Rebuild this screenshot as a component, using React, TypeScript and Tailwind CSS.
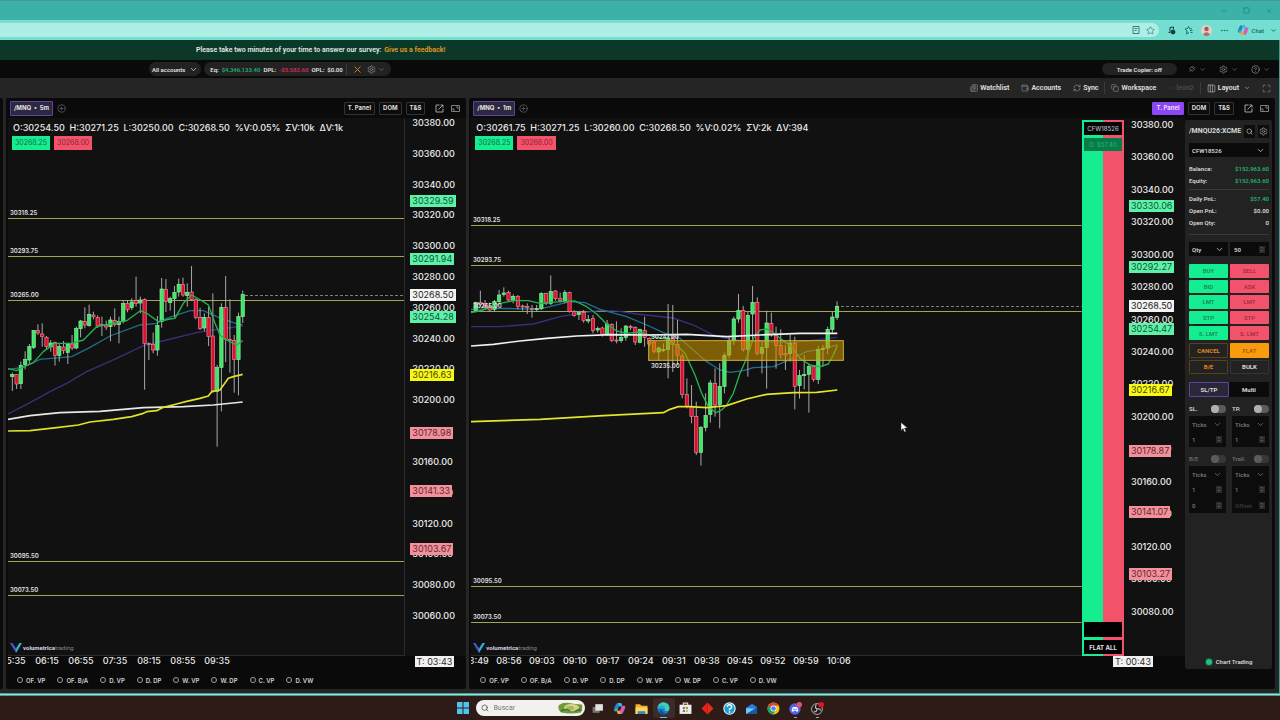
import type { ReactNode } from "react";
import {
  ChevronDown, ChevronUp, CircleHelp, CirclePlus, Columns3, Copy, Ellipsis, Maximize,
  Minus, Newspaper, Plug, RefreshCw, Search, Settings, Square, Star, Wallet, X,
} from "lucide-react";

type Candle = [high: number, top: number, bottom: number, low: number, up: 0 | 1];
type Line = { color: string; width: number; points: string };
type Tone = "green" | "white" | "yellow" | "pink";
type Badge = { price: number; tone: Tone };

const TONES: Record<Tone, string> = {
  green: "bg-[#5cf3a8] text-[#145238]",
  white: "bg-[#f4f4f4] text-[#222222]",
  yellow: "bg-[#f7f813] text-[#44440c]",
  pink: "bg-[#f2919b] text-[#672630]",
};

const LEVELS = [30318.25, 30293.75, 30265, 30095.5, 30073.5];

// series are kept on a 3x grid and scaled down when drawn
const CANDLES_5M: Candle[] = [
  [518, 524, 530, 573, 1], [522, 524, 552, 567, 0], [485, 497, 551, 567, 1], [454, 478, 494, 508, 1],
  [432, 440, 480, 492, 1], [390, 392, 442, 447, 1], [373, 392, 399, 405, 0], [370, 402, 410, 440, 0],
  [408, 412, 440, 450, 0], [420, 429, 441, 455, 1], [425, 428, 466, 497, 0], [432, 440, 466, 485, 1],
  [423, 441, 452, 462, 0], [428, 433, 457, 492, 1], [405, 432, 444, 450, 0], [380, 386, 444, 448, 1],
  [360, 363, 386, 412, 1], [322, 365, 375, 385, 0], [314, 343, 377, 380, 1], [335, 345, 350, 358, 0],
  [346, 352, 378, 384, 0], [350, 373, 376, 408, 0], [362, 375, 381, 390, 0], [350, 360, 380, 424, 1],
  [325, 362, 374, 380, 0], [350, 365, 374, 430, 1], [302, 311, 364, 370, 1], [300, 311, 329, 337, 0],
  [295, 306, 323, 330, 1], [230, 302, 311, 320, 0], [290, 300, 309, 340, 1], [295, 299, 430, 569, 0],
  [427, 431, 434, 480, 0], [398, 434, 450, 460, 0], [348, 376, 450, 467, 1], [234, 267, 365, 383, 1],
  [237, 269, 304, 336, 0], [290, 296, 308, 332, 1], [258, 278, 296, 352, 1], [236, 253, 276, 290, 1],
  [233, 253, 285, 290, 0], [250, 277, 287, 320, 1], [198, 276, 298, 302, 0], [295, 299, 353, 358, 0],
  [323, 353, 386, 390, 0], [340, 352, 384, 394, 1], [320, 353, 410, 438, 0], [280, 408, 572, 578, 0],
  [495, 503, 574, 740, 1], [310, 322, 502, 634, 1], [228, 322, 418, 486, 0], [298, 418, 422, 518, 0],
  [405, 422, 478, 578, 0], [338, 350, 479, 586, 1], [272, 284, 350, 369, 1],
];

const CANDLES_1M: Candle[] = [
  [155, 158, 182, 187, 1], [122, 158, 163, 170, 0], [150, 160, 170, 180, 0], [158, 170, 180, 185, 0],
  [150, 155, 178, 183, 1], [120, 135, 155, 160, 1], [112, 129, 133, 140, 1], [122, 127, 150, 155, 0],
  [133, 139, 152, 160, 1], [135, 139, 170, 178, 0], [164, 168, 171, 182, 0], [160, 169, 172, 192, 0],
  [165, 175, 178, 203, 0], [165, 176, 179, 186, 1], [127, 130, 176, 180, 1], [128, 130, 160, 165, 0],
  [76, 124, 160, 165, 1], [120, 123, 146, 152, 0], [128, 145, 152, 158, 0], [120, 127, 155, 160, 1],
  [125, 127, 184, 188, 0], [180, 184, 196, 200, 0], [184, 188, 194, 210, 1], [180, 188, 212, 218, 0],
  [195, 209, 213, 220, 1], [195, 205, 242, 250, 0], [230, 236, 240, 248, 1], [230, 234, 254, 260, 0],
  [210, 222, 253, 258, 1], [220, 224, 272, 276, 0], [214, 270, 273, 280, 0], [235, 263, 272, 278, 1],
  [226, 228, 262, 272, 1], [225, 229, 233, 240, 0], [229, 233, 276, 285, 0], [236, 239, 277, 280, 1],
  [200, 242, 262, 290, 0], [262, 265, 282, 290, 0], [270, 277, 305, 310, 0], [290, 294, 306, 330, 1],
  [280, 298, 301, 306, 1], [162, 264, 298, 385, 1], [165, 264, 284, 366, 0], [210, 284, 317, 345, 0],
  [310, 318, 433, 445, 0], [385, 434, 470, 475, 0], [405, 471, 500, 520, 0], [455, 500, 607, 615, 0],
  [528, 533, 607, 647, 1], [430, 497, 532, 544, 1], [390, 399, 493, 518, 1], [355, 400, 465, 500, 0],
  [340, 409, 463, 535, 1], [308, 316, 409, 430, 1], [260, 273, 315, 325, 1], [200, 207, 272, 285, 1],
  [132, 181, 207, 218, 1], [168, 182, 298, 305, 0], [185, 196, 298, 380, 1], [108, 158, 192, 275, 1],
  [142, 157, 310, 316, 0], [275, 293, 310, 370, 1], [182, 219, 293, 416, 1], [188, 220, 255, 260, 0],
  [230, 256, 286, 356, 0], [238, 287, 314, 325, 0], [285, 311, 315, 360, 0], [255, 280, 311, 335, 1],
  [260, 280, 409, 478, 0], [360, 377, 407, 446, 1], [315, 374, 377, 418, 1], [340, 350, 373, 488, 1],
  [345, 350, 389, 395, 0], [288, 298, 388, 402, 1], [285, 295, 298, 350, 1], [230, 238, 294, 312, 1],
  [185, 201, 238, 248, 1], [154, 169, 202, 210, 1],
];

const LINES_5M: Line[] = [
  { color: "#33327a", width: 4, points: "24,642 90,608 150,575 200,550 260,515 350,475 430,437 500,420 590,398 640,390 728,378" },
  { color: "#1d6f86", width: 4, points: "24,508 70,502 120,478 215,470 270,442 330,408 420,375 470,370 500,355 570,332 610,332 650,350 700,368 728,375" },
  { color: "#27b34e", width: 4, points: "24,506 50,512 70,500 100,488 130,455 165,430 215,430 250,420 290,380 330,372 380,362 421,332 440,340 475,365 510,357 525,355 550,310 575,285 610,305 625,315 645,370 660,405 680,420 700,430 710,435 728,422" },
  { color: "#e8e8e8", width: 5, points: "24,658 90,647 180,638 300,634 430,623 550,620 640,615 728,606" },
  { color: "#dfe02a", width: 5, points: "24,693 90,692 170,683 235,675 270,666 340,658 395,650 430,640 440,635 470,632 490,622 530,612 560,604 600,595 625,588 635,575 660,570 685,535 700,530 728,523" },
];

const LINES_1M: Line[] = [
  { color: "#33327a", width: 4, points: "33,230 120,230 220,222 300,200 345,192 420,181 480,184 530,192 640,204 700,225 740,245 760,255 820,270 900,275 1000,278 1132,262" },
  { color: "#1d6f94", width: 4, points: "33,178 130,175 235,178 330,155 375,158 420,178 500,200 560,225 610,248 660,265 700,300 740,335 780,360 810,367 850,362 880,353 940,350 975,335 1040,305 1080,298 1132,285" },
  { color: "#27b34e", width: 4, points: "33,188 70,180 120,160 160,152 205,152 240,160 300,155 345,153 380,170 410,192 440,222 470,243 500,250 540,246 580,260 620,268 655,290 675,310 705,375 725,430 745,470 768,488 785,480 800,465 820,430 840,370 860,325 880,265 900,240 920,237 940,248 960,265 995,290 1020,325 1050,345 1080,350 1105,342 1120,315 1132,287" },
  { color: "#f1f1f1", width: 5, points: "33,288 100,283 180,273 260,265 350,258 450,254 560,255 680,253 800,260 900,255 1020,250 1132,250" },
  { color: "#e4e52a", width: 5, points: "33,515 240,508 430,497 610,488 630,478 655,470 690,470 740,473 800,467 860,447 920,433 1000,428 1070,427 1132,420" },
];

const INDICATORS = ["OF. VP", "OF. B/A", "D. VP", "D. DP", "W. VP", "W. DP", "C. VP", "D. VW"];

type ChartData = {
  name: string;
  top: number; // y of the 30380 label
  scale: number; // px per point
  last: number;
  candles: Candle[];
  step: number;
  first: number;
  origin: [number, number];
  lines: Line[];
  lastX: number;
  zone?: boolean;
};

const CHART_5M: ChartData = {
  name: "5m", top: 5, scale: 1.5406, last: 30060, candles: CANDLES_5M, step: 12.8, first: 37,
  origin: [-8, 82], lines: LINES_5M, lastX: 237,
};

const CHART_1M: ChartData = {
  name: "1m", top: 7, scale: 1.6217, last: 30080, candles: CANDLES_1M, step: 14.08, first: 47,
  origin: [-11, 132], lines: LINES_1M, lastX: 370, zone: true,
};

const yOf = (c: ChartData, price: number) => Math.round(c.top + (30380 - price) * c.scale);

function VolumetricaLogo() {
  return (
    <div className="absolute bottom-[2px] left-[2px] flex items-center gap-px text-[6px] leading-none text-[#8a8a8a]">
      <svg width="12" height="10" viewBox="0 0 24 20">
        <path d="M0 0h5l7 11v9z" fill="#4557c8" />
        <path d="M24 0h-5l-7 11v9z" fill="#35b4d8" />
        <path d="M5 5l7 10 7-10-7 8z" fill="#3b86dc" />
      </svg>
      <span><b className="font-bold text-[#d6d6e2]">volumetrica</b>trading</span>
    </div>
  );
}

function Plot({ chart }: { chart: ChartData }) {
  const last = yOf(chart, 30268.5);
  return (
    <svg className="absolute inset-0 h-full w-full" role="img" aria-label={`MNQ ${chart.name} chart`}>
      {LEVELS.map((p) => (
        <line key={p} x1="0" x2="100%" y1={yOf(chart, p) + 0.5} y2={yOf(chart, p) + 0.5} stroke="#a3a45a" strokeWidth="1" />
      ))}
      <line x1={chart.lastX} x2="100%" y1={last + 0.5} y2={last + 0.5} stroke="#7d7d7d" strokeDasharray="3 2" />
      <g transform={`translate(${chart.origin[0]} ${chart.origin[1]}) scale(0.33333)`}>
        {chart.lines.slice(0, 2).map((l) => (
          <polyline key={l.color} points={l.points} fill="none" stroke={l.color} strokeWidth={l.width} />
        ))}
        {chart.candles.map(([high, top, bottom, low, up], i) => {
          const x = chart.first + i * chart.step;
          return (
            <g key={i}>
              <line x1={x} x2={x} y1={high} y2={low} stroke="#a9a9a9" strokeWidth="3" />
              <rect
                x={x - 5} y={top} width="10" height={Math.max(bottom - top, 3)}
                fill={up ? "#3fe566" : "#dd0f30"} stroke={up ? "#8cf0a0" : "#e78591"} strokeWidth="2"
              />
            </g>
          );
        })}
        {chart.lines.slice(2).map((l) => (
          <polyline key={l.color} points={l.points} fill="none" stroke={l.color} strokeWidth={l.width} strokeLinejoin="round" />
        ))}
        {chart.zone && (
          <rect x="566" y="272" width="584" height="59" fill="#c79200" fillOpacity="0.6" stroke="#c9b13a" strokeWidth="3" />
        )}
      </g>
      <g fill="#e2e2e2" fontSize="6" fontWeight="600" fontFamily="Inter, sans-serif">
        {LEVELS.map((p) => (
          <text key={p} x="2" y={yOf(chart, p) - 3}>{p.toFixed(2)}</text>
        ))}
        {chart.zone && (
          <>
            <text x="180" y="221">30247.00</text>
            <text x="180" y="250">30235.00</text>
          </>
        )}
      </g>
    </svg>
  );
}

function PriceAxis({ chart, badges }: { chart: ChartData; badges: Badge[] }) {
  const ticks: number[] = [];
  for (let p = 30380; p >= chart.last; p -= 20) ticks.push(p);
  return (
    <div className="relative w-[61px] shrink-0 overflow-hidden font-['Inter',sans-serif] text-[9px] leading-3">
      {ticks.map((p) => (
        <span key={p} className="absolute left-[7px] -translate-y-1/2 font-medium text-[#ececec]" style={{ top: yOf(chart, p) }}>
          {p.toFixed(2)}
        </span>
      ))}
      {badges.map((b) => (
        <span key={b.price} className={`absolute left-[5px] -translate-y-1/2 px-[2px] ${TONES[b.tone]}`} style={{ top: yOf(chart, b.price) }}>
          {b.price.toFixed(2)}
        </span>
      ))}
    </div>
  );
}

function HeadButton({ active, children }: { active?: boolean; children: ReactNode }) {
  return (
    <button
      className={`h-[13px] rounded-[1px] border px-[3px] text-[6px] leading-none font-bold ${
        active ? "border-[#8b46f5] bg-[#8b46f5] text-[#eadcff]" : "border-[#333333] bg-[#0c0c0c] text-[#dddddd]"
      }`}
    >
      {children}
    </button>
  );
}

function PanelHead({ symbol, active }: { symbol: string; active?: boolean }) {
  return (
    <div className="flex h-5 shrink-0 items-center gap-1 pr-[6px] pl-1 font-['Inter',sans-serif]">
      <button className="h-[15px] rounded-[1px] border border-[#5b45a0] bg-[#2d2740] px-[3px] text-[6px] leading-none font-bold whitespace-pre text-[#e4e4e4]">
        /MNQ  •  {symbol}
      </button>
      <button aria-label="Add tab" className="mr-auto text-[#636363]"><CirclePlus size={9} strokeWidth={2} /></button>
      <HeadButton active={active}>T. Panel</HeadButton>
      <HeadButton>DOM</HeadButton>
      <HeadButton>T&amp;S</HeadButton>
      <button aria-label="Pop out" className="ml-[6px] text-[#a0a0a0]">
        <svg width="9" height="9" viewBox="0 0 18 18" fill="none" stroke="currentColor" strokeWidth="2">
          <path d="M9 2H2v14h14V9M11 2h5v5M16 2L7 11" />
        </svg>
      </button>
      <button aria-label="Expand" className="ml-[3px] text-[#7d7d7d]">
        <svg width="9" height="9" viewBox="0 0 18 18" fill="none" stroke="currentColor" strokeWidth="2">
          <path d="M1 3h16v12H1zM10 6h4v4M4 8v4h4" />
        </svg>
      </button>
    </div>
  );
}

function Indicators() {
  return (
    <div className="flex h-5 shrink-0 items-center gap-3 pt-[2px] pl-[11px] font-['Inter',sans-serif] text-[6px] font-semibold text-[#d2d2d2]">
      {INDICATORS.map((name) => (
        <label key={name} className="flex items-center gap-[3px]">
          <input type="checkbox" className="size-[6px] appearance-none rounded-full border border-[#a0a0a0]" />
          {name}
        </label>
      ))}
    </div>
  );
}

function TimeRow({ times, left, cell }: { times: string[]; left: string; cell: string }) {
  return (
    <div className="relative ml-[2px] flex h-[13px] shrink-0 items-start overflow-hidden font-['Inter',sans-serif]">
      <div className="-ml-3 flex text-[9px] leading-none font-medium text-[#e8e8e8]">
        {times.map((t) => <span key={t} className={`${cell} shrink-0 text-center`}>{t}</span>)}
      </div>
      <span className="ml-auto bg-[#f1f1f1] px-[2px] text-[9px] leading-[11px] text-[#2b2b2b]">T: {left}</span>
    </div>
  );
}

function Overlay({ children }: { children: ReactNode }) {
  return (
    <div className="absolute top-[3px] left-1 flex flex-col items-start gap-[2px] font-['Inter',sans-serif]">
      <p className="pl-px text-[9px] leading-[13px] font-medium whitespace-pre text-[#ebebeb]">{children}</p>
      <div className="flex gap-1 text-[7px] leading-[14px]">
        <span className="bg-[#14ee90] px-[3px] text-[#18694a]">30268.25</span>
        <span className="bg-[#f2526a] px-[3px] text-[#8d2536]">30268.00</span>
      </div>
    </div>
  );
}

function PositionStrip() {
  return (
    <div className="mt-[2px] flex w-[42px] shrink-0 flex-col gap-[3px] bg-linear-to-r from-[#14ee90] from-50% to-[#f2526a] to-50% p-[2px] text-center font-['Inter',sans-serif] text-[6px] leading-[13px] font-medium">
      <span className="bg-[#060606] text-[#b9bccb]">CFW18526</span>
      <span className="bg-[#087b48] text-[#13b56c]">D: $57.40</span>
      <span className="mt-auto h-[15px] bg-black" />
      <button className="h-[14px] bg-black font-bold text-[#e0e0e0]">FLAT ALL</button>
    </div>
  );
}

function Stepper() {
  return (
    <span className="flex h-[7px] w-[6px] flex-col items-center justify-center bg-[#2a2a2a] text-[#aaaaaa]">
      <ChevronUp size={4} strokeWidth={3} />
      <ChevronDown size={4} strokeWidth={3} />
    </span>
  );
}

function NumberBox({ label, value, placeholder }: { label: string; value?: string; placeholder?: string }) {
  return (
    <label className="flex h-4 items-center justify-between">
      <input aria-label={label} defaultValue={value} placeholder={placeholder} className="w-5 bg-transparent outline-none placeholder:text-[#3a3a3a]" />
      <Stepper />
    </label>
  );
}

function PanelSelect({ label, value }: { label: string; value: string }) {
  return (
    <label className="relative flex h-[14px] items-center">
      <select aria-label={label} className="w-full appearance-none bg-transparent outline-none">
        <option>{value}</option>
      </select>
      <ChevronDown size={9} className="pointer-events-none absolute right-0" />
    </label>
  );
}

function Toggle({ label, dim }: { label: string; dim?: boolean }) {
  return (
    <label className={`flex items-center justify-between ${dim ? "opacity-40" : ""}`}>
      {label}
      <span className="h-2 w-[15px] rounded-full bg-[#5b5b5b]">
        <input type="checkbox" className="block size-2 appearance-none rounded-full bg-[#b0b0b0]" />
      </span>
    </label>
  );
}

function Row({ label, value, green }: { label: string; value: string; green?: boolean }) {
  return (
    <div className="flex h-3 items-center justify-between">
      <span>{label}</span>
      <span className={green ? "text-[#1fb36c]" : ""}>{value}</span>
    </div>
  );
}

const ORDERS = ["BUY", "SELL", "BID", "ASK", "LMT", "LMT", "STP", "STP", "S. LMT", "S. LMT"];

function TradePanel() {
  return (
    <aside className="mt-[2px] mr-[3px] flex w-[87px] shrink-0 flex-col rounded-[2px] bg-[#222222] pt-1 pr-[3px] pl-1 text-[6px] font-semibold text-[#d8d8d8]">
      <div className="flex h-[14px] items-center gap-[3px]">
        <span className="flex-1 text-[7px] font-bold">/MNQU26:XCME</span>
        <button aria-label="Search symbol" className="flex size-[13px] items-center justify-center bg-[#0d0d0d]"><Search size={7} /></button>
        <button aria-label="Panel settings" className="flex size-[13px] items-center justify-center bg-[#0d0d0d] text-[#9a9a9a]"><Settings size={9} /></button>
      </div>
      <div className="mt-[5px] bg-[#0b0b0b] pr-1 pl-[3px]"><PanelSelect label="Account" value="CFW18526" /></div>
      <div className="mt-[5px] border-b border-[#3a3a3a] pb-[3px]">
        <Row label="Balance:" value="$152,963.60" green />
        <Row label="Equity:" value="$152,963.60" green />
      </div>
      <div className="mt-[2px] border-b border-[#3a3a3a] pb-[6px]">
        <Row label="Daily PnL:" value="$57.40" green />
        <Row label="Open PnL:" value="$0.00" />
        <Row label="Open Qty:" value="0" />
      </div>
      <div className="mt-[7px] grid grid-cols-2 gap-[2px]">
        <div className="bg-[#0b0b0b] pr-1 pl-[3px]"><PanelSelect label="Quantity mode" value="Qty" /></div>
        <div className="flex flex-col justify-center bg-[#0b0b0b] px-[4px]"><div className="-my-px"><NumberBox label="Quantity" value="50" /></div></div>
      </div>
      <div className="mt-2 grid h-[76px] grid-cols-2 gap-[2px] font-medium">
        {ORDERS.map((o, i) => (
          <button key={i} className={`rounded-[1px] ${i % 2 ? "bg-[#f2526a] text-[#9b2c3d]" : "bg-[#14ee90] text-[#178155]"}`}>{o}</button>
        ))}
      </div>
      <div className="mt-[3px] grid h-[31px] grid-cols-2 gap-[2px] font-bold">
        <button className="rounded-[1px] border border-[#5a4012] text-[#e0861c]">CANCEL</button>
        <button className="rounded-[1px] bg-[#f99b0c] text-[#a56300]">FLAT</button>
        <button className="rounded-[1px] border border-[#5a4012] text-[#e0861c]">B/E</button>
        <button className="rounded-[1px] border border-[#343434]">BULK</button>
      </div>
      <div className="mt-2 grid h-[15px] grid-cols-2 font-bold">
        <button className="rounded-[1px] border border-[#5b45a0] bg-[#2b2639]">SL/TP</button>
        <button className="bg-[#0b0b0b]">Multi</button>
      </div>
      <div className="mt-[7px] grid grid-cols-2 gap-x-[6px]">
        <Toggle label="SL." />
        <Toggle label="TP." />
      </div>
      <div className="mt-[3px] grid grid-cols-2 gap-x-[6px] text-[#777777]">
        {["Stop loss", "Take profit"].map((n) => (
          <div key={n} className="bg-[#0c0c0c] pt-px pr-1 pl-[3px]">
            <PanelSelect label={`${n} unit`} value="Ticks" />
            <NumberBox label={n} value="1" />
          </div>
        ))}
      </div>
      <div className="mt-[7px] grid grid-cols-2 gap-x-[6px]">
        <Toggle label="B/E" dim />
        <Toggle label="Trail." dim />
      </div>
      <div className="mt-[3px] grid grid-cols-2 gap-x-[6px] text-[#777777]">
        {["Break even", "Trailing"].map((n, i) => (
          <div key={n} className="bg-[#0c0c0c] pt-px pr-1 pl-[3px]">
            <PanelSelect label={`${n} unit`} value="Ticks" />
            <NumberBox label={n} value="1" />
            <NumberBox label={`${n} offset`} value={i ? undefined : "0"} placeholder="Offset" />
          </div>
        ))}
      </div>
      <div className="mt-auto flex items-center justify-center gap-1 pb-[3px]">
        <span className="size-[6px] rounded-full bg-[#1fc07a] ring-1 ring-[#14593c]" />
        Chart Trading
      </div>
    </aside>
  );
}

function BrowserChrome() {
  return (
    <header className="shrink-0">
      <div className="flex h-5 items-center justify-end gap-[15px] border-t border-[#46998c] bg-[#3bb1a7] pr-[7px] text-[#1b766e]">
        <button aria-label="Minimize"><Minus size={8} strokeWidth={1.5} /></button>
        <button aria-label="Restore"><Square size={7} strokeWidth={2} /></button>
        <button aria-label="Close"><X size={8} strokeWidth={1.5} /></button>
      </div>
      <div className="flex h-5 items-center gap-2 bg-[#74dfd1] pr-[3px] text-[#17665f]">
        <div className="flex h-[14px] flex-1 items-center justify-end gap-[6px] rounded-r-full bg-[#aeeee5] pr-1">
          <button aria-label="Reader">
            <svg width="8" height="8" viewBox="0 0 16 16" fill="none" stroke="currentColor" strokeWidth="1.6"><path d="M2 1h12v14H2zM5 5h6M5 9h4" /></svg>
          </button>
          <button aria-label="Favorite"><Star size={9} strokeWidth={1.5} /></button>
        </div>
        <button aria-label="Extensions">
          <svg width="9" height="9" viewBox="0 0 18 18" fill="none" stroke="#123f3c" strokeWidth="2"><path d="M6 13V3l7-1v5M3 13h3" /><circle cx="12" cy="12" r="4" fill="#123f3c" /></svg>
        </button>
        <button aria-label="Favorites">
          <svg width="9" height="9" viewBox="0 0 18 18" fill="none" stroke="currentColor" strokeWidth="1.8"><path d="M10 13l-5 3 1-6-4-4 5-1 2-4 2 4 5 1M12 9h5M13 13h4" /></svg>
        </button>
        <button aria-label="Profile">
          <svg width="11" height="11" viewBox="0 0 22 22"><circle cx="11" cy="11" r="11" fill="#e6cfc8" /><circle cx="11" cy="8" r="4.5" fill="#9c5d55" /><path d="M4 19q7-9 14 0q-7 6-14 0" fill="#a3716b" /></svg>
        </button>
        <button aria-label="More"><Ellipsis size={9} /></button>
        <div className="flex items-center gap-[6px]">
          <button className="flex items-center gap-[3px] text-[6px] font-medium">
            <CopilotIcon size={12} />
            Chat
          </button>
          <ChevronDown size={7} strokeWidth={3} />
        </div>
      </div>
    </header>
  );
}

function CopilotIcon({ size }: { size: number }) {
  return (
    <svg width={size} height={size} viewBox="0 0 24 24">
      <path d="M9 2h6l2 6h-6l-3 9H3q-3-1-1-5l3-7q1-3 4-3" fill="#2c7de0" />
      <path d="M9 2h6l2 6h-6z" fill="#2fc6d8" />
      <path d="M15 22H9l-2-6h6l3-9h5q3 1 1 5l-3 7q-1 3-4 3" fill="#d45bbf" />
      <path d="M15 22H9l-2-6h6z" fill="#f4a53a" />
      <path d="M3 17l2-6 4 1-1 5z" fill="#43b56c" />
    </svg>
  );
}

function TopBars() {
  const muted = "flex items-center gap-[3px] text-[#858585]";
  return (
    <>
      <div className="flex h-5 shrink-0 items-center gap-[3px] rounded-tr bg-[#0c3927] pl-[196px] text-[7px] font-semibold text-[#e2e8e4]">
        Please take two minutes of your time to answer our survey:
        <a href="#feedback" className="text-[#e29a25]">Give us a feedback!</a>
      </div>
      <div className="flex h-[18px] shrink-0 items-center gap-[3px] bg-[#0a0a0a] pr-[9px] pl-[149px] text-[6px] font-semibold text-[#e2e2e2]">
        <button className="flex h-[14px] items-center gap-1 rounded-full bg-[#222222] px-[3px]">
          All accounts <ChevronDown size={9} />
        </button>
        <div className="flex h-[14px] items-center gap-[3px] rounded-full bg-[#222222] px-[6px]">
          <span>Eq:</span><span className="text-[#1fae68]">$4,346,133.40</span>
          <span>DPL:</span><span className="text-[#d62d54]">-$5,582.60</span>
          <span>OPL:</span><span>$0.00</span>
          <span className="h-3 border-l border-[#3b3b3b]" />
          <button aria-label="Close all" className="ml-[2px] text-[#cf8420]"><X size={11} strokeWidth={2} /></button>
          <button aria-label="Account settings" className="ml-px flex items-center gap-[2px] text-[#8b8b8b]"><Settings size={9} /><ChevronDown size={7} /></button>
        </div>
        <button className="ml-auto h-3 rounded-full bg-[#222222] px-[15px]">Trade Copier: off</button>
        <button aria-label="Connections" className={`${muted} ml-2`}><Plug size={8} className="rotate-45" /><ChevronDown size={7} /></button>
        <button aria-label="Settings" className={`${muted} ml-[10px]`}><Settings size={9} /><ChevronDown size={7} /></button>
        <button aria-label="Help" className={`${muted} ml-[10px]`}><CircleHelp size={9} /><ChevronDown size={7} /></button>
      </div>
      <nav className="flex h-5 shrink-0 items-center justify-end gap-3 pr-2 text-[7px] font-semibold text-[#e0e0e0]">
        <button className="flex items-center gap-[2px]"><Newspaper size={8} className="text-[#8a8a8a]" />Watchlist</button>
        <button className="flex items-center gap-[2px]"><Wallet size={8} className="text-[#8a8a8a]" />Accounts</button>
        <button className="flex items-center gap-[2px]"><RefreshCw size={8} className="text-[#8a8a8a]" />Sync</button>
        <span className="-mx-[6px] h-3 border-l border-[#3b3b3b]" />
        <button className="flex items-center gap-[2px]"><Copy size={8} className="text-[#8a8a8a]" />Workspace</button>
        <span className="flex items-center gap-[2px] text-[#4c4c4c]"><Minus size={6} />leon2</span>
        <span className="-mx-[6px] h-3 border-l border-[#3b3b3b]" />
        <button className="flex items-center gap-[2px]"><Columns3 size={9} className="text-[#a5a5a5]" />Layout<ChevronDown size={6} className="ml-[3px]" /></button>
        <button aria-label="Full screen" className="text-[#858585]"><Maximize size={9} /></button>
      </nav>
    </>
  );
}

const TASKS: { name: string; icon: ReactNode; open?: boolean; dot?: boolean }[] = [
  { name: "Task view", icon: <><path d="M3 9h13v11H3z" fill="#77716f" /><path d="M8 4h14v12H8z" fill="#e4e2e1" /></> },
  { name: "Copilot", icon: <CopilotIcon size={24} /> },
  { name: "Explorer", icon: <><path d="M1 4h8l3 3h11v15H1z" fill="#f0b429" /><path d="M1 10h22v12H1z" fill="#ffd75e" /><path d="M5 17h14v5H5z" fill="#2f83cf" /></> },
  { name: "Edge", open: true, icon: <><circle cx="12" cy="12" r="11" fill="#1676c9" /><path d="M1 12a11 11 0 0 1 22-1q0 5-5 6-4 0-4-2 2-5-3-6-7 0-10 3" fill="#3fd0b0" /><path d="M1 12q3-7 10-5 5 1 4 6" fill="#2aa6df" /><path d="M8 13q0 7 8 8-6 4-11-1 0-5 3-7" fill="#0d4f9a" /></> },
  { name: "Store", icon: <><path d="M8 6V2h8v4" fill="none" stroke="#d9d9d9" strokeWidth="2" /><path d="M1 5h22v17H1z" fill="#eeeeee" /><path d="M7 9h4v4H7z" fill="#e5533a" /><path d="M12.500 9h4v4h-4z" fill="#6cb33e" /><path d="M7 14.500h4v4H7z" fill="#2f8fe0" /><path d="M12.500 14.500h4v4h-4z" fill="#f2b82c" /></> },
  { name: "Trading", icon: <><path d="M12 1l11 11-11 11z" fill="#e0300f" /><path d="M12 1v22L1 12z" fill="#f11d1d" /></> },
  { name: "Help", icon: <><circle cx="12" cy="12" r="11.500" fill="#e8f6fb" /><circle cx="12" cy="12" r="9.500" fill="#1d9fd0" /><path d="M8 9q0-4 4-4t4 4q0 2-4 4v2M12 17v3" stroke="#fff" strokeWidth="2.600" fill="none" /></> },
  { name: "Mail", icon: <><path d="M2 11l11-8 9 6v12H2z" fill="#2b7fd8" /><path d="M2 11l20 2v9H2z" fill="#7cc3f5" /><path d="M2 22l20-12v12z" fill="#1559ad" /></> },
  { name: "Chrome", icon: <><circle cx="12" cy="12" r="11" fill="#f4c20d" /><path d="M2.500 6.500A11 11 0 0 1 22 7H12l-4 7z" fill="#db4437" /><path d="M2.500 6.500A11 11 0 0 0 11 23l5-8-8-1z" fill="#1fa15d" /><circle cx="12" cy="12" r="5.500" fill="#fff" /><circle cx="12" cy="12" r="4.200" fill="#4285f4" /></> },
  { name: "Discord", dot: true, icon: <><circle cx="11" cy="13" r="10.500" fill="#5561e8" /><path d="M5 17q0-7 3-8h6q3 1 3 8l-3 1-1-2H9l-1 2z" fill="#fff" /><circle cx="9" cy="13.500" r="1.400" fill="#5561e8" /><circle cx="13" cy="13.500" r="1.400" fill="#5561e8" /><circle cx="19" cy="5" r="5" fill="#e3536a" /></> },
  { name: "OBS", dot: true, icon: <><circle cx="11" cy="13" r="10" fill="#231f20" stroke="#c9c9c9" strokeWidth="1.500" /><path d="M11 13q-5-3-1-8M11 13q5-2 7 3M11 13q0 6-6 5" fill="none" stroke="#c9c9c9" strokeWidth="2" /><circle cx="19" cy="5" r="5" fill="#e81123" /></> },
];

function Taskbar() {
  return (
    <footer className="flex h-6 shrink-0 items-center justify-center bg-[#2d1b17] pl-[5px]">
      <button aria-label="Start" className="mr-[7px]">
        <svg width="12" height="12" viewBox="0 0 24 24" fill="#4fc3f3"><path d="M0 0h11v11H0zM13 0h11v11H13zM0 13h11v11H0zM13 13h11v11H13z" /></svg>
      </button>
      <label className="mr-[2px] flex h-4 w-[109px] items-center gap-[5px] rounded-full bg-[#f3f1ee] pr-[2px] pl-[5px] text-[#3a3a3a]">
        <Search size={8} />
        <input aria-label="Buscar" placeholder="Buscar" className="min-w-0 flex-1 bg-transparent text-[7px] outline-none placeholder:text-[#777777]" />
        <svg width="25" height="12" viewBox="0 0 50 24">
          <path d="M2 6q8-6 20-4t26 3q2 8-2 16-20 4-40 0Q-2 14 2 6" fill="#6f9a3a" />
          <ellipse cx="27" cy="11" rx="15" ry="7" fill="#d9cf8f" />
          <ellipse cx="24" cy="12" rx="8" ry="4" fill="#9dbb58" />
          <path d="M6 18q10-6 18 0M34 19q8-6 12-2" stroke="#3f7427" strokeWidth="3" fill="none" />
        </svg>
      </label>
      {TASKS.map((t) => (
        <button key={t.name} aria-label={t.name} className={`relative flex h-5 w-[22px] items-center justify-center rounded-[2px] ${t.open ? "bg-[#3b2c29]" : ""}`}>
          <svg width="13" height="13" viewBox="0 0 24 24">{t.icon}</svg>
          {t.open && <span className="absolute bottom-0 h-px w-[7px] bg-[#5ac8f5]" />}
          {t.dot && <span className="absolute bottom-0 h-px w-[3px] bg-[#a89f9c]" />}
        </button>
      ))}
    </footer>
  );
}

const greens = (...p: number[]): Badge[] => p.map((price) => ({ price, tone: "green" }));
const pinks = (...p: number[]): Badge[] => p.map((price) => ({ price, tone: "pink" }));

const BADGES_5M: Badge[] = [
  ...greens(30329.59, 30291.94, 30254.28), { price: 30268.5, tone: "white" },
  { price: 30216.63, tone: "yellow" }, ...pinks(30178.98, 30141.33, 30103.67),
];
const BADGES_1M: Badge[] = [
  ...greens(30330.06, 30292.27, 30254.47), { price: 30268.5, tone: "white" },
  { price: 30216.67, tone: "yellow" }, ...pinks(30178.87, 30141.07, 30103.27),
];

export default function App() {
  return (
    <div className="flex h-screen flex-col overflow-hidden bg-[#252525] font-['Roboto',sans-serif]">
      <BrowserChrome />
      <div className="flex min-h-0 flex-1 flex-col border-r border-[#3f9d93]">
        <TopBars />
        <main className="flex min-h-0 flex-1 gap-[3px] pr-1">
          <div className="w-[3px] shrink-0 rounded-r-[2px] bg-[#0a0a0a]" />

          <section className="flex min-w-0 flex-[4] flex-col rounded-[2px] bg-[#0a0a0a]">
            <PanelHead symbol="5m" />
            <div className="ml-[2px] flex min-h-0 flex-1 bg-[#111111]">
              <div className="relative min-w-0 flex-1 overflow-hidden border-r border-b border-[#2b2b2b]">
                <Plot chart={CHART_5M} />
                <Overlay>O:30254.50  H:30271.25  L:30250.00  C:30268.50  %V:0.05%  ΣV:10k  ΔV:1k</Overlay>
                <VolumetricaLogo />
              </div>
              <PriceAxis chart={CHART_5M} badges={BADGES_5M} />
            </div>
            <div className="pr-3">
              <TimeRow times={["05:35", "06:15", "06:55", "07:35", "08:15", "08:55", "09:35"]} left="03:43" cell="w-[34px]" />
            </div>
            <Indicators />
          </section>

          <section className="flex min-w-0 flex-[7] flex-col rounded-[2px] bg-[#0a0a0a]">
            <PanelHead symbol="1m" active />
            <div className="flex min-h-0 flex-1">
              <div className="flex min-w-0 flex-1 flex-col">
                <div className="ml-[2px] flex min-h-0 flex-1 bg-[#111111]">
                  <div className="relative min-w-0 flex-1 overflow-hidden border-b border-[#2b2b2b]">
                    <Plot chart={CHART_1M} />
                    <Overlay>O:30261.75  H:30271.25  L:30260.00  C:30268.50  %V:0.02%  ΣV:2k  ΔV:394</Overlay>
                    <VolumetricaLogo />
                  </div>
                  <PositionStrip />
                  <PriceAxis chart={CHART_1M} badges={BADGES_1M} />
                </div>
                <div className="pr-8">
                  <TimeRow
                    times={["08:49", "08:56", "09:03", "09:10", "09:17", "09:24", "09:31", "09:38", "09:45", "09:52", "09:59", "10:06"]}
                    left="00:43"
                    cell="w-[33px]"
                  />
                </div>
              </div>
              <TradePanel />
            </div>
            <Indicators />
          </section>
        </main>
        <div className="h-1 shrink-0" />
      </div>
      <div className="h-[3px] shrink-0 border-y border-[#4b9d94] bg-[#9adfd6]" />
      <Taskbar />

      {/* mouse pointer */}
      <svg className="pointer-events-none fixed top-[422px] left-[900px]" width="8" height="11" viewBox="0 0 16 22">
        <path d="M2 1v16l4-4 3 7 3-1-3-7h6z" fill="#ffffff" stroke="#333333" />
      </svg>
    </div>
  );
}
